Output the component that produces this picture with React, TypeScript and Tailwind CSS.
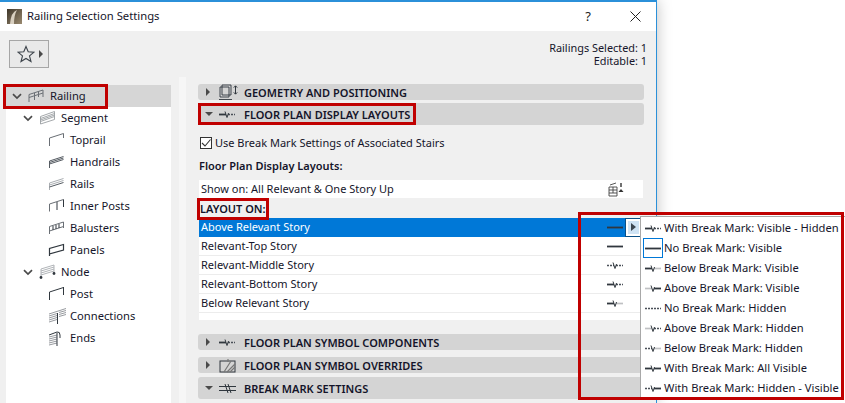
import React from "react";

const F = { fontFamily: '"Noto Sans", "Open Sans", sans-serif' };
const D = "#30373e";

type Seg = "s" | "d" | "l" | "n";
function lineSeg(x1: number, x2: number, s: Seg, y: number, k: string) {
  if (s === "n") return null;
  const p: Record<string, any> = {
    s: { stroke: D, strokeWidth: 1.8 },
    d: { stroke: "#4a5058", strokeWidth: 1.5, strokeDasharray: "2 1" },
    l: { stroke: "#bfc1c3", strokeWidth: 1.7 },
  };
  return <line key={k} x1={x1} x2={x2} y1={y} y2={y} {...p[s]} />;
}
function Brk({ l, r, mark = true }: { l: Seg; r: Seg; mark?: boolean }) {
  return (
    <svg width="16" height="9" viewBox="0 0 16 9" className="shrink-0">
      {mark ? (
        <>
          {lineSeg(0, 7, l, 4.5, "a")}
          {lineSeg(9, 16, r, 4.5, "b")}
          <path d="M6 1.5 L8 7.5 L9.5 3" fill="none" stroke={D} strokeWidth="1" />
        </>
      ) : (
        lineSeg(0, 16, l, 4.5, "a")
      )}
    </svg>
  );
}

const G = "#6a6f75";
function Rail({ kind }: { kind: string }) {
  const base = <path d="M1.5 13.5 V6 L15.5 1.5" fill="none" stroke={G} strokeWidth="1" />;
  const c: Record<string, React.ReactNode> = {
    railing: (
      <>
        <path d="M1 14 V6.5 L15 2 V9 M1 9.5 L15 5 M6.5 12 V5 M10.5 9 V3.5" fill="none" stroke={G} strokeWidth="1" />
      </>
    ),
    segment: (
      <>
        <path d="M1.5 14 V6.5 L15.5 1.5 V9.5 L1.5 14 M1.5 8.5 L15.5 3.5 M1.5 10 L15.5 5 M1.5 11.5 L15.5 6.5" fill="none" stroke="#9a9ea2" strokeWidth="0.9" />
      </>
    ),
    toprail: <><path d="M1.5 14 V6 L15.5 1.5 V6" fill="none" stroke={G} strokeWidth="1" /></>,
    handrails: (
      <>
        <path d="M1.5 14 V7 M1.5 7 L15.5 2.5 M1.5 8.5 L15.5 4 M1.5 10 L15.5 5.5" fill="none" stroke="#555b62" strokeWidth="1" />
      </>
    ),
    rails: (
      <>
        <path d="M1.5 14 V7 M1.5 7 L15.5 2.5 M1.5 9 L15.5 4.5" fill="none" stroke="#aaaeb2" strokeWidth="1" />
        <path d="M1.5 11 L15.5 6.5" fill="none" stroke="#555b62" strokeWidth="1" />
      </>
    ),
    posts: (
      <>
        {base}
        <path d="M15.5 1.5 V9 M9 4 V12" fill="none" stroke={D} strokeWidth="1" />
      </>
    ),
    balusters: (
      <>
        <path d="M1.5 14 V6.5 L15.5 2 V8 M1.5 11 L15.5 6.5" fill="none" stroke={G} strokeWidth="1" />
        <path d="M5 6 V10 M8 5 V9 M11 4 V8" stroke={D} strokeWidth="1" />
      </>
    ),
    panels: (
      <>
        <path d="M1.5 14 V6.5 L15.5 2.5 V8 L1.5 12 Z" fill="none" stroke={D} strokeWidth="1.2" />
      </>
    ),
    node: (
      <>
        <path d="M2 13 V5 L15 1 V9 M2 7 L15 3 M2 9 L15 5 M2 11 L15 7" fill="none" stroke="#a8acb0" strokeWidth="0.9" />
        <circle cx="2" cy="13.5" r="1.4" fill={D} />
        <circle cx="15" cy="9.5" r="1.4" fill={D} />
      </>
    ),
    post: <path d="M1.5 14 V6 L15.5 1.5 M15.5 1 V9" fill="none" stroke={D} strokeWidth="1" />,
    conn: (
      <>
        <path d="M1 6 L18 0.5 M1 8 L9 5.5 M1 10 L9 7.5 M1 12 L9 9.5 M1 14 L9 11.5 M11 4.5 L18 2.5 M11 6.5 L18 4.5 M11 8.5 L18 6.5" fill="none" stroke="#8b8f94" strokeWidth="0.9" />
        <path d="M9.5 5 V16" stroke={D} strokeWidth="1" />
      </>
    ),
    ends: (
      <>
        <path d="M1 7 L9 5 M1 9 L9 7 M1 11 L9 9 M1 13 L9 11 M1 15 L9 13" fill="none" stroke="#8b8f94" strokeWidth="0.9" />
        <path d="M1 5 L9 2 Q12 1.5 12 5 V8 M9 3 V16" fill="none" stroke={D} strokeWidth="1" />
      </>
    ),
  };
  return (
    <svg width="19" height="16" viewBox="0 0 19 16" className="shrink-0">
      {c[kind]}
    </svg>
  );
}

function Chev() {
  return (
    <svg width="10" height="7" viewBox="0 0 10 7" className="shrink-0">
      <path d="M1 1.2 L5 5 L9 1.2" fill="none" stroke="#4a4a4a" strokeWidth="1.7" />
    </svg>
  );
}

function TreeRow({ indent, chev, kind, label, selected }: { indent: string; chev?: boolean; kind: string; label: string; selected?: boolean }) {
  return (
    <div className={`h-[22px] flex items-center text-[11.2px] text-[#15152a] ${indent} ${selected ? "bg-[#d6d6d6]" : ""}`}>
      {chev && (
        <span className="w-[16px] flex">
          <Chev />
        </span>
      )}
      <Rail kind={kind} />
      <span className="ml-[3px]">{label}</span>
    </div>
  );
}

function Section({ open, icon, label, className }: { open?: boolean; icon: React.ReactNode; label: string; className: string }) {
  return (
    <div className={`flex items-center rounded-[3px] bg-[#d4d4d4] pl-[7px] ${className}`}>
      <span className="w-[14px] flex">
        {open ? (
          <span className="w-0 h-0 border-x-[4px] border-x-transparent border-t-[4px] border-t-[#4a4a4a]" />
        ) : (
          <span className="w-0 h-0 border-y-[4px] border-y-transparent border-l-[4px] border-l-[#4a4a4a] ml-[1px]" />
        )}
      </span>
      <span className="w-[25px] flex items-center">{icon}</span>
      <span className="text-[11px] font-semibold text-[#14142a] leading-none">{label}</span>
    </div>
  );
}

function ListRow({ label, icon, selected }: { label: string; icon: React.ReactNode; selected?: boolean }) {
  return (
    <div
      className={`h-[19px] flex items-center pl-[2px] text-[11px] ${
        selected ? "bg-[#0078d7] text-white" : "bg-white text-[#15152a] border-b border-[#ececec]"
      }`}
    >
      <span className="flex-1">{label}</span>
      <span className="w-[17px] flex">{icon}</span>
      <span className="w-[19px] h-[16px] flex justify-end pr-[2px]">
        {selected && (
          <span className="w-[15px] h-[17px] -mt-[1px] bg-[#cfe3f4] border-2 border-white outline outline-1 outline-[#0a4f86] flex items-center justify-center">
            <span className="w-0 h-0 border-y-[4px] border-y-transparent border-l-[5px] border-l-[#3c4650]" />
          </span>
        )}
      </span>
    </div>
  );
}

function PopItem({ icon, label, boxed }: { icon: React.ReactNode; label: string; boxed?: boolean }) {
  return (
    <div className="h-[20px] flex items-center text-[11.2px] text-[#15152a] whitespace-nowrap">
      <span className={`w-[20px] h-[20px] ml-[2px] flex items-center justify-center ${boxed ? "border border-[#0078d7]" : ""}`}>{icon}</span>
      <span className="ml-[1px]">{label}</span>
    </div>
  );
}

const Frame = ({ className }: { className: string }) => (
  <div className={`absolute border-[3px] border-[#c00000] pointer-events-none ${className}`} />
);

export default function App() {
  return (
    <div className="relative w-[845px] h-[403px] overflow-hidden bg-white" style={F}>
      <div className="w-[657px] h-[403px] flex flex-col border-t-2 border-r border-[#2b90d9] bg-[#f0f0f0] shadow-[0_0_14px_rgba(0,0,0,0.25)]">
        {/* title bar */}
        <div className="h-[29px] shrink-0 bg-white flex items-center pl-[7px] pr-[15px]">
          <svg width="15" height="15" viewBox="0 0 15 15" className="shrink-0">
            <defs>
              <linearGradient id="lg" x1="0" y1="0" x2="1" y2="1">
                <stop offset="0" stopColor="#3d3529" />
                <stop offset="1" stopColor="#9a8a70" />
              </linearGradient>
            </defs>
            <rect width="15" height="15" fill="url(#lg)" />
            <path d="M3 15 Q4 3 10 1 Q7 6 7 15 Z" fill="#d8cfc0" />
          </svg>
          <span className="ml-[5px] text-[11.25px] text-[#15152a]">Railing Selection Settings</span>
          <span className="ml-auto text-[13px] text-[#222] mr-[39px]">?</span>
          <svg width="11" height="11" viewBox="0 0 11 11">
            <path d="M0.5 0.5 L10.5 10.5 M10.5 0.5 L0.5 10.5" stroke="#222" strokeWidth="1" />
          </svg>
        </div>
        {/* toolbar */}
        <div className="h-[54px] shrink-0 flex items-start justify-between pl-[9px] pr-[9px] pt-[9px]">
          <div className="w-[40px] h-[28px] border border-[#a6a6a6] bg-[#e9e9e9] flex items-center pl-[7px]">
            <svg width="18" height="18" viewBox="0 0 18 18">
              <path d="M9 1.5 L11.2 6.8 L17 7.2 L12.5 10.9 L14 16.5 L9 13.5 L4 16.5 L5.5 10.9 L1 7.2 L6.8 6.8 Z" fill="none" stroke="#3d444b" strokeWidth="1.1" />
            </svg>
            <span className="ml-[4px] w-0 h-0 border-y-[4px] border-y-transparent border-l-[4px] border-l-[#4a4a4a]" />
          </div>
          <div className="text-right text-[10.9px] leading-[13px] text-[#15152a] pt-[1px]">
            <div>Railings Selected: 1</div>
            <div>Editable: 1</div>
          </div>
        </div>
        {/* main */}
        <div className="flex-1 flex min-h-0">
          <div className="ml-[6px] w-[165px] bg-white shrink-0">
            <TreeRow indent="pl-[6px]" chev kind="railing" label="Railing" selected />
            <TreeRow indent="pl-[17px]" chev kind="segment" label="Segment" />
            <TreeRow indent="pl-[42px]" kind="toprail" label="Toprail" />
            <TreeRow indent="pl-[42px]" kind="handrails" label="Handrails" />
            <TreeRow indent="pl-[42px]" kind="rails" label="Rails" />
            <TreeRow indent="pl-[42px]" kind="posts" label="Inner Posts" />
            <TreeRow indent="pl-[42px]" kind="balusters" label="Balusters" />
            <TreeRow indent="pl-[42px]" kind="panels" label="Panels" />
            <TreeRow indent="pl-[17px]" chev kind="node" label="Node" />
            <TreeRow indent="pl-[42px]" kind="post" label="Post" />
            <TreeRow indent="pl-[42px]" kind="conn" label="Connections" />
            <TreeRow indent="pl-[42px]" kind="ends" label="Ends" />
          </div>
          <div className="ml-[8px] w-[7px] -mt-[8px] bg-[#f6f6f6] shrink-0" />
          <div className="ml-[12px] w-[446px] shrink-0 flex flex-col">
            <Section
              className="h-[16px] -mt-[1px]"
              label="GEOMETRY AND POSITIONING"
              icon={
                <svg width="20" height="17" viewBox="0 0 20 17">
                  <path d="M1 13 V3 H3 V1 H12 V11 H10 V13 Z M3 3 H10 V11 H3 Z M0 15.5 H13" fill="none" stroke={D} strokeWidth="0.9" />
                  <path d="M16.5 2 V10 M14.8 3.6 L16.5 1.8 L18.2 3.6 M14.8 8.4 L16.5 10.2 L18.2 8.4" fill="none" stroke={D} strokeWidth="1" />
                </svg>
              }
            />
            <Section className="h-[22px] mt-[3px]" open label="FLOOR PLAN DISPLAY LAYOUTS" icon={<Brk l="s" r="d" />} />
            <div className="mt-[10px] h-[16px] flex items-center pl-[2px] text-[11px] text-[#15152a]">
              <span className="w-[12px] h-[12px] border border-[#333] bg-white flex items-center justify-center">
                <svg width="10" height="10" viewBox="0 0 10 10">
                  <path d="M1 5 L4 8 L9.5 1.5" fill="none" stroke="#333" strokeWidth="1.1" />
                </svg>
              </span>
              <span className="ml-[3px]">Use Break Mark Settings of Associated Stairs</span>
            </div>
            <div className="mt-[7px] h-[16px] pl-[1px] flex items-center text-[11px] font-semibold text-[#14142a]">Floor Plan Display Layouts:</div>
            <div className="mt-[6px] h-[18px] ml-[1px] w-[444px] bg-white flex items-center pl-[2px] pr-[19px] justify-between text-[11px] text-[#15152a]">
              <span>Show on: All Relevant &amp; One Story Up</span>
              <svg width="16" height="15" viewBox="0 0 16 15">
                <path d="M2 3 L8 1 M1 5 H9 M1 8 H9 M1 11 H9 M1 14 H9 M1 5 V14 M9 5 V14 M5 5 V11" fill="none" stroke="#444" strokeWidth="0.9" />
                <path d="M13 1 V5" stroke="#222" strokeWidth="1.3" />
                <path d="M10.5 10 L13 7 L15.5 10 Z" fill="#333" />
              </svg>
            </div>
            <div className="mt-[3px] h-[16px] pl-[2px] flex items-center text-[11px] font-semibold text-[#14142a]">LAYOUT ON:</div>
            <div className="ml-[1px] w-[444px] bg-white h-[102px] mt-[1px]">
              <ListRow selected label="Above Relevant Story" icon={<Brk l="s" r="s" mark={false} />} />
              <ListRow label="Relevant-Top Story" icon={<Brk l="s" r="s" mark={false} />} />
              <ListRow label="Relevant-Middle Story" icon={<Brk l="d" r="d" />} />
              <ListRow label="Relevant-Bottom Story" icon={<Brk l="s" r="d" />} />
              <ListRow label="Below Relevant Story" icon={<Brk l="s" r="l" />} />
            </div>
            <Section className="h-[16px] mt-[14px]" label="FLOOR PLAN SYMBOL COMPONENTS" icon={<Brk l="s" r="d" />} />
            <Section
              className="h-[16px] mt-[7px]"
              label="FLOOR PLAN SYMBOL OVERRIDES"
              icon={
                <svg width="18" height="15" viewBox="0 0 18 15">
                  <rect x="1" y="3" width="15" height="11" fill="none" stroke={D} strokeWidth="1" />
                  <path d="M8 14 L16 6 M11 14 L16 9 M5 14 L12 3 M9 1 V4" fill="none" stroke="#777" strokeWidth="1.2" />
                </svg>
              }
            />
            <Section
              className="h-[22px] mt-[4px]"
              open
              label="BREAK MARK SETTINGS"
              icon={
                <svg width="17" height="11" viewBox="0 0 17 11">
                  <path d="M0 3.5 H17 M0 7.5 H17" stroke={D} strokeWidth="1" />
                  <path d="M6 1 L9 10 M9 1 L12 10" stroke={D} strokeWidth="1" fill="none" />
                </svg>
              }
            />
          </div>
        </div>
      </div>

      {/* popup menu */}
      <div className="absolute left-[640px] top-[216px] w-[205px] h-[184px] bg-white border-l border-t border-[#a8a8a8] pt-[1px]">
        <PopItem icon={<Brk l="s" r="d" />} label="With Break Mark: Visible - Hidden" />
        <PopItem boxed icon={<Brk l="s" r="s" mark={false} />} label="No Break Mark: Visible" />
        <PopItem icon={<Brk l="s" r="l" />} label="Below Break Mark: Visible" />
        <PopItem icon={<Brk l="l" r="s" />} label="Above Break Mark: Visible" />
        <PopItem icon={<Brk l="d" r="d" mark={false} />} label="No Break Mark: Hidden" />
        <PopItem icon={<Brk l="l" r="d" />} label="Above Break Mark: Hidden" />
        <PopItem icon={<Brk l="d" r="l" />} label="Below Break Mark: Hidden" />
        <PopItem icon={<Brk l="s" r="s" />} label="With Break Mark: All Visible" />
        <PopItem icon={<Brk l="d" r="s" />} label="With Break Mark: Hidden - Visible" />
      </div>

      <Frame className="left-[3px] top-[84px] w-[105px] h-[25px]" />
      <Frame className="left-[198px] top-[103px] w-[218px] h-[22px]" />
      <Frame className="left-[197px] top-[198px] w-[72px] h-[22px]" />
      <Frame className="left-[578px] top-[212px] w-[266px] h-[188px]" />
    </div>
  );
}
